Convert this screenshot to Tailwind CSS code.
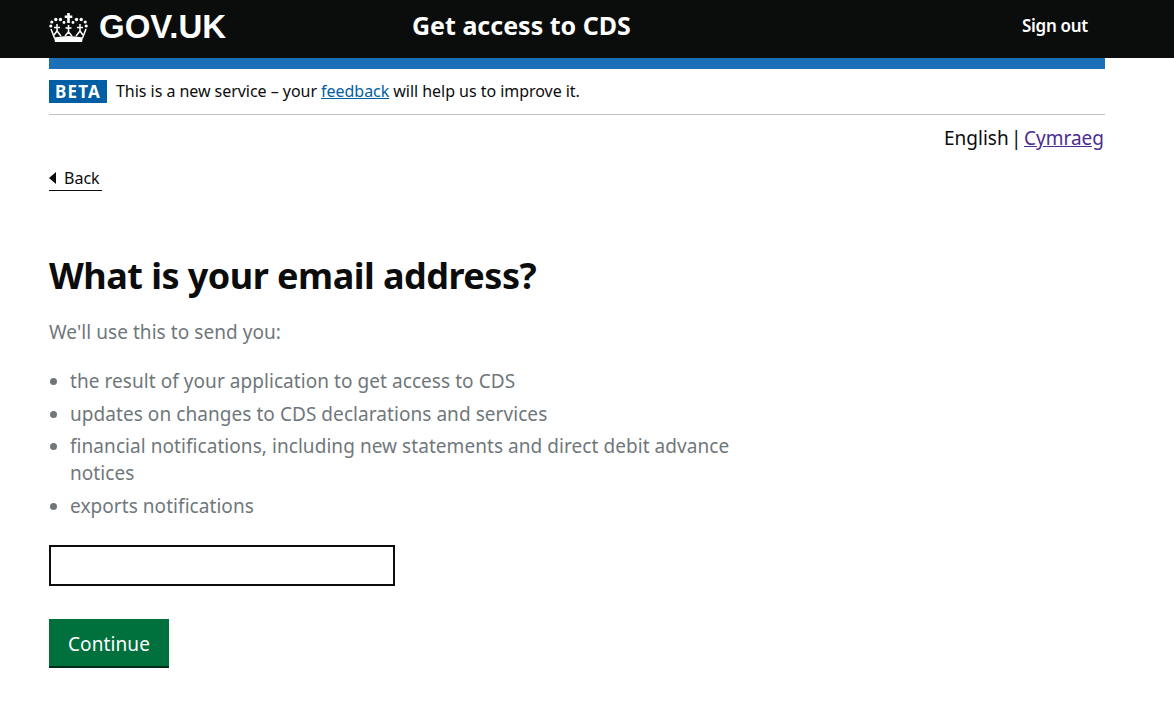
<!DOCTYPE html>
<html lang="en">
<head>
    <meta charset="UTF-8">
    <meta name="viewport" content="width=device-width, initial-scale=1.0">
    <title>Get access to CDS</title>
    <script src="https://cdn.jsdelivr.net/npm/@tailwindcss/browser@4"></script>
</head>
<body class="bg-white min-h-screen font-['Noto_Sans',sans-serif] text-[#0b0c0c]">
    <header class="bg-[#0b0c0c] h-[58px] text-white">
        <div class="mx-[49px] w-[1056px] h-full flex items-center pb-[6px]">
            <a class="flex items-center w-[363px] font-['Liberation_Sans',sans-serif] font-bold text-[33px] leading-none pt-[1px]">
                <!-- crown -->
                <svg class="w-[39px] h-[29px] mr-[11px] mt-[2px]" viewBox="0 0 39 29" fill="white">
                    <path d="M18.200 0h2.600v2.500h2.500v2.600h-2.500V10h-2.600V5.100h-2.500V2.500h2.500z"/>
                    <circle cx="1.800" cy="13" r="1.600"/><circle cx="2.800" cy="9" r="1.600"/><circle cx="6.800" cy="6.500" r="1.700"/><circle cx="11.500" cy="6.500" r="1.700"/><circle cx="15" cy="9.500" r="1.400"/>
                    <circle cx="37.200" cy="13" r="1.600"/><circle cx="36.200" cy="9" r="1.600"/><circle cx="32.200" cy="6.500" r="1.700"/><circle cx="27.500" cy="6.500" r="1.700"/><circle cx="24" cy="9.500" r="1.400"/>
                    <path d="M5 24.500Q19.500 21.500 34 24.500L33 29H6z"/>
                    <g fill="none" stroke="white" stroke-width="1.500">
                        <path d="M8 11v7M5 14.500h6M31 11v7M28 14.500h6M19.500 12v7M16.500 15h6"/>
                        <path d="M2 16l3.500 9M37 16l-3.500 9"/>
                        <path d="M8 18l-3 4M8 18l4 5M31 18l3 4M31 18l-4 5M19.500 19l-3.500 4M19.500 19l3.500 4"/>
                    </g>
                </svg>
                GOV.UK
            </a>
            <span class="font-bold text-[25px] w-[610px]">Get access to CDS</span>
            <a class="font-semibold text-[17px] tracking-[-0.3px]">Sign out</a>
        </div>
    </header>
    <main class="mx-[49px] w-[1056px]">
        <div class="h-[11px] bg-[#1d70b8]"></div>
        <div class="flex items-center h-[46px] border-b border-[#bfc1c3] text-[16px] pb-[1px]">
            <strong class="bg-[#005ea5] text-white font-bold text-[17px] tracking-[1.200px] leading-[23px] px-[6px] mr-[9px]">BETA</strong>
            <span class="tracking-[-0.04px]">This is a new service – your <a class="text-[#005ea5] underline">feedback</a> will help us to improve it.</span>
        </div>
        <p class="text-right text-[19px] mt-[9px] leading-[28px] pr-px [word-spacing:-2.5px]">English | <a class="text-[#4c2c92] underline">Cymraeg</a></p>
        <a class="inline-flex items-center mt-[14px] text-[16px] border-b border-[#0b0c0c] leading-[24px] w-[53px]">
            <span class="w-0 h-0 border-y-[6px] border-y-transparent border-r-[7px] border-r-[#0b0c0c] mr-[8px]"></span>Back
        </a>
        <h1 class="font-bold text-[36px] leading-[40px] mt-[65px] mb-[23px] tracking-[-0.52px]">What is your email address?</h1>
        <div class="text-[#6f777b] text-[19px] leading-[27px] max-w-[700px] tracking-[0.06px]">
            <p class="mb-[22px]">We'll use this to send you:</p>
            <ul class="list-disc pl-[21px] marker:text-[#6f777b]">
                <li class="mb-[5.500px]">the result of your application to get access to CDS</li>
                <li class="mb-[5.500px]">updates on changes to CDS declarations and services</li>
                <li class="mb-[5.500px]">financial notifications, including new statements and direct debit advance notices</li>
                <li>exports notifications</li>
            </ul>
        </div>
        <input type="text" class="block mt-[25px] w-[346px] h-[41px] border-2 border-[#0b0c0c] bg-white">
        <button class="block mt-[33px] w-[120px] h-[49px] bg-[#00703c] text-white text-[19px] tracking-[0.1px] pt-[5px] border-b-2 border-[#002d18]">Continue</button>
    </main>
</body>
</html>
